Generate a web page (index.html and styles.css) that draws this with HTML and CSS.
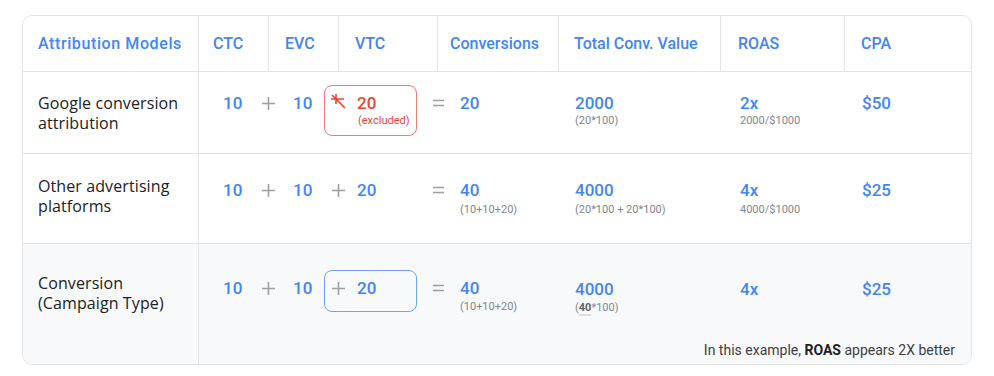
FILE: index.html
```html
<!DOCTYPE html>
<html>
<head>
<meta charset="utf-8">
<link rel="stylesheet" href="styles.css">
</head>
<body>
<div class="card">
  <div class="row head">
    <div class="hc c1">Attribution Models</div>
    <div class="hc c2">CTC</div>
    <div class="hc c3">EVC</div>
    <div class="hc c4">VTC</div>
    <div class="hc c5">Conversions</div>
    <div class="hc c6">Total Conv. Value</div>
    <div class="hc c7">ROAS</div>
    <div class="hc c8">CPA</div>
  </div>

  <div class="row r1">
    <div class="label">Google conversion<br>attribution</div>
    <div class="eq">
      <div class="slot n1 num">10</div>
      <div class="slot op1"><svg class="plus" viewBox="0 0 13 13"><path d="M6.5 0V13M0 6.5H13"/></svg></div>
      <div class="slot n2 num">10</div>
      <div class="box excl">
        <div class="boxline">
          <span class="ico"><svg class="star" viewBox="0 0 15 15"><path d="M0 5H13M1 1L14 14M5 0V10"/></svg></span>
          <span class="num red">20</span>
        </div>
        <div class="sub red excl-sub">(excluded)</div>
      </div>
      <div class="slot eqs"><svg class="equals" viewBox="0 0 11 8"><path d="M0 1.5H11M0 6.5H11"/></svg></div>
      <div class="slot res"><div class="num">20</div></div>
    </div>
    <div class="val v6"><div class="num">2000</div><div class="sub">(20*100)</div></div>
    <div class="val v7"><div class="num">2x</div><div class="sub">2000/$1000</div></div>
    <div class="val v8"><div class="num">$50</div></div>
  </div>

  <div class="row r2">
    <div class="label">Other advertising<br>platforms</div>
    <div class="eq">
      <div class="slot n1 num">10</div>
      <div class="slot op1"><svg class="plus" viewBox="0 0 13 13"><path d="M6.5 0V13M0 6.5H13"/></svg></div>
      <div class="slot n2 num">10</div>
      <div class="box ghost">
        <div class="boxline">
          <span class="ico"><svg class="plus" viewBox="0 0 13 13"><path d="M6.5 0V13M0 6.5H13"/></svg></span>
          <span class="num">20</span>
        </div>
      </div>
      <div class="slot eqs"><svg class="equals" viewBox="0 0 11 8"><path d="M0 1.5H11M0 6.5H11"/></svg></div>
      <div class="slot res"><div class="num">40</div><div class="sub sub2">(10+10+20)</div></div>
    </div>
    <div class="val v6"><div class="num">4000</div><div class="sub sub2">(20*100 + 20*100)</div></div>
    <div class="val v7"><div class="num">4x</div><div class="sub sub2">4000/$1000</div></div>
    <div class="val v8"><div class="num">$25</div></div>
  </div>

  <div class="row r3">
    <div class="label">Conversion<br>(Campaign Type)</div>
    <div class="eq">
      <div class="slot n1 num">10</div>
      <div class="slot op1"><svg class="plus" viewBox="0 0 13 13"><path d="M6.5 0V13M0 6.5H13"/></svg></div>
      <div class="slot n2 num">10</div>
      <div class="box incl">
        <div class="boxline">
          <span class="ico"><svg class="plus" viewBox="0 0 13 13"><path d="M6.5 0V13M0 6.5H13"/></svg></span>
          <span class="num">20</span>
        </div>
      </div>
      <div class="slot eqs"><svg class="equals" viewBox="0 0 11 8"><path d="M0 1.5H11M0 6.5H11"/></svg></div>
      <div class="slot res"><div class="num">40</div><div class="sub sub3">(10+10+20)</div></div>
    </div>
    <div class="val v6"><div class="num">4000</div><div class="sub sub3">(<b class="hl">40</b>*100)</div></div>
    <div class="val v7"><div class="num">4x</div></div>
    <div class="val v8"><div class="num">$25</div></div>
    <div class="note">In this example, <b>ROAS</b> appears 2X better</div>
  </div>
</div>
</body>
</html>
```

FILE: styles.css
```css
* { box-sizing: border-box; }
html, body { margin: 0; padding: 0; background: #ffffff; }
body {
  padding: 15px 0 0 22px;
  font-family: Roboto, "Liberation Sans", Arial, sans-serif;
}
.card {
  width: 950px;
  border: 1px solid #e3e3e3;
  border-radius: 10px;
  overflow: hidden;
}
.row {
  display: grid;
  grid-template-columns: 176px 70px 70px 99px 121px 162px 124px 126px;
  border-bottom: 1px solid #e3e3e3;
  align-items: start;
}
.row.r3 { border-bottom: none; background: #f8f9fa; grid-template-rows: auto auto; }

.head { height: 56px; align-items: stretch; }
.hc {
  display: flex;
  align-items: center;
  border-right: 1px solid #e3e3e3;
  color: #4285f4;
  font-weight: 500;
  font-size: 16px;
  padding-left: 16px;
  padding-bottom: 1px;
}
.hc.c1 { padding-left: 15px; letter-spacing: 0.6px; }
.hc.c2 { padding-left: 14px; }
.hc.c5 { padding-left: 12px; }
.hc.c6 { padding-left: 15px; }
.hc.c7 { padding-left: 17px; }
.hc.c8 { border-right: none; }

.r1 { height: 82px; --lt: 21px; --nt: 21px; }
.r2 { height: 90px; --lt: 22px; --nt: 26px; }
.r3 { height: 120px; --lt: 29px; --nt: 35px; }

.label {
  align-self: stretch;
  border-right: 1px solid #e3e3e3;
  padding: var(--lt) 0 0 15px;
  font-family: "Open Sans", Roboto, sans-serif;
  font-size: 16px;
  line-height: 20px;
  color: #202124;
  letter-spacing: 0.1px;
}
.r3 .label { grid-row: 1 / span 2; }

.num {
  font-size: 17px;
  line-height: 20px;
  font-weight: 500;
  color: #4285f4;
}
.num.red { color: #ea4335; }
.sub {
  font-size: 11px;
  line-height: 14px;
  color: #80868b;
  margin-top: 1px;
}
.sub2 { margin-top: 3px; }
.sub3 { margin-top: 2px; }
.sub.red { color: #ea4335; }
.hl {
  font-weight: 700;
  color: #5f6368;
  border-bottom: 2px solid #dadce0;
}

.eq {
  grid-column: 2 / span 4;
  display: flex;
  align-items: flex-start;
  padding: calc(var(--nt) - 8px) 0 0 24px;
}
.slot { padding-top: 8px; }
.n1 { width: 39px; }
.op1 { width: 31px; }
.n2 { width: 31px; }
.eqs { width: 27px; margin-left: 16px; }
.res { width: 98px; }

.plus, .equals, .star {
  display: block;
  fill: none;
  stroke: #9aa0a6;
  stroke-width: 1.6;
}
.plus { width: 13px; height: 13px; margin-top: 4px; }
.equals { width: 11px; height: 8px; margin-top: 6px; }
.star { width: 15px; height: 15px; margin-top: 1px; margin-left: -1px; stroke: #ea4335; stroke-width: 1.6; }

.box {
  width: 93px;
  border: 1px solid transparent;
  border-radius: 8px;
  padding: 7px 0 7px 7px;
}
.box.excl { border-color: #f07b70; }
.box.incl { border-color: #6ea1f5; padding-bottom: 13px; }
.boxline { display: flex; align-items: flex-start; }
.ico { width: 25px; }
.excl-sub { padding-left: 26px; }

.val { padding-top: var(--nt); }
.v6 { padding-left: 16px; }
.v7 { padding-left: 19px; }
.v8 { padding-left: 17px; }

.note {
  grid-column: 2 / span 7;
  justify-self: end;
  padding: 0 16px 0 0;
  margin-top: 20px;
  font-size: 14px;
  line-height: 20px;
  color: #3c4043;
}
.note b { color: #202124; font-weight: 700; }
.r3 .eq { padding-top: 26px; }
```
